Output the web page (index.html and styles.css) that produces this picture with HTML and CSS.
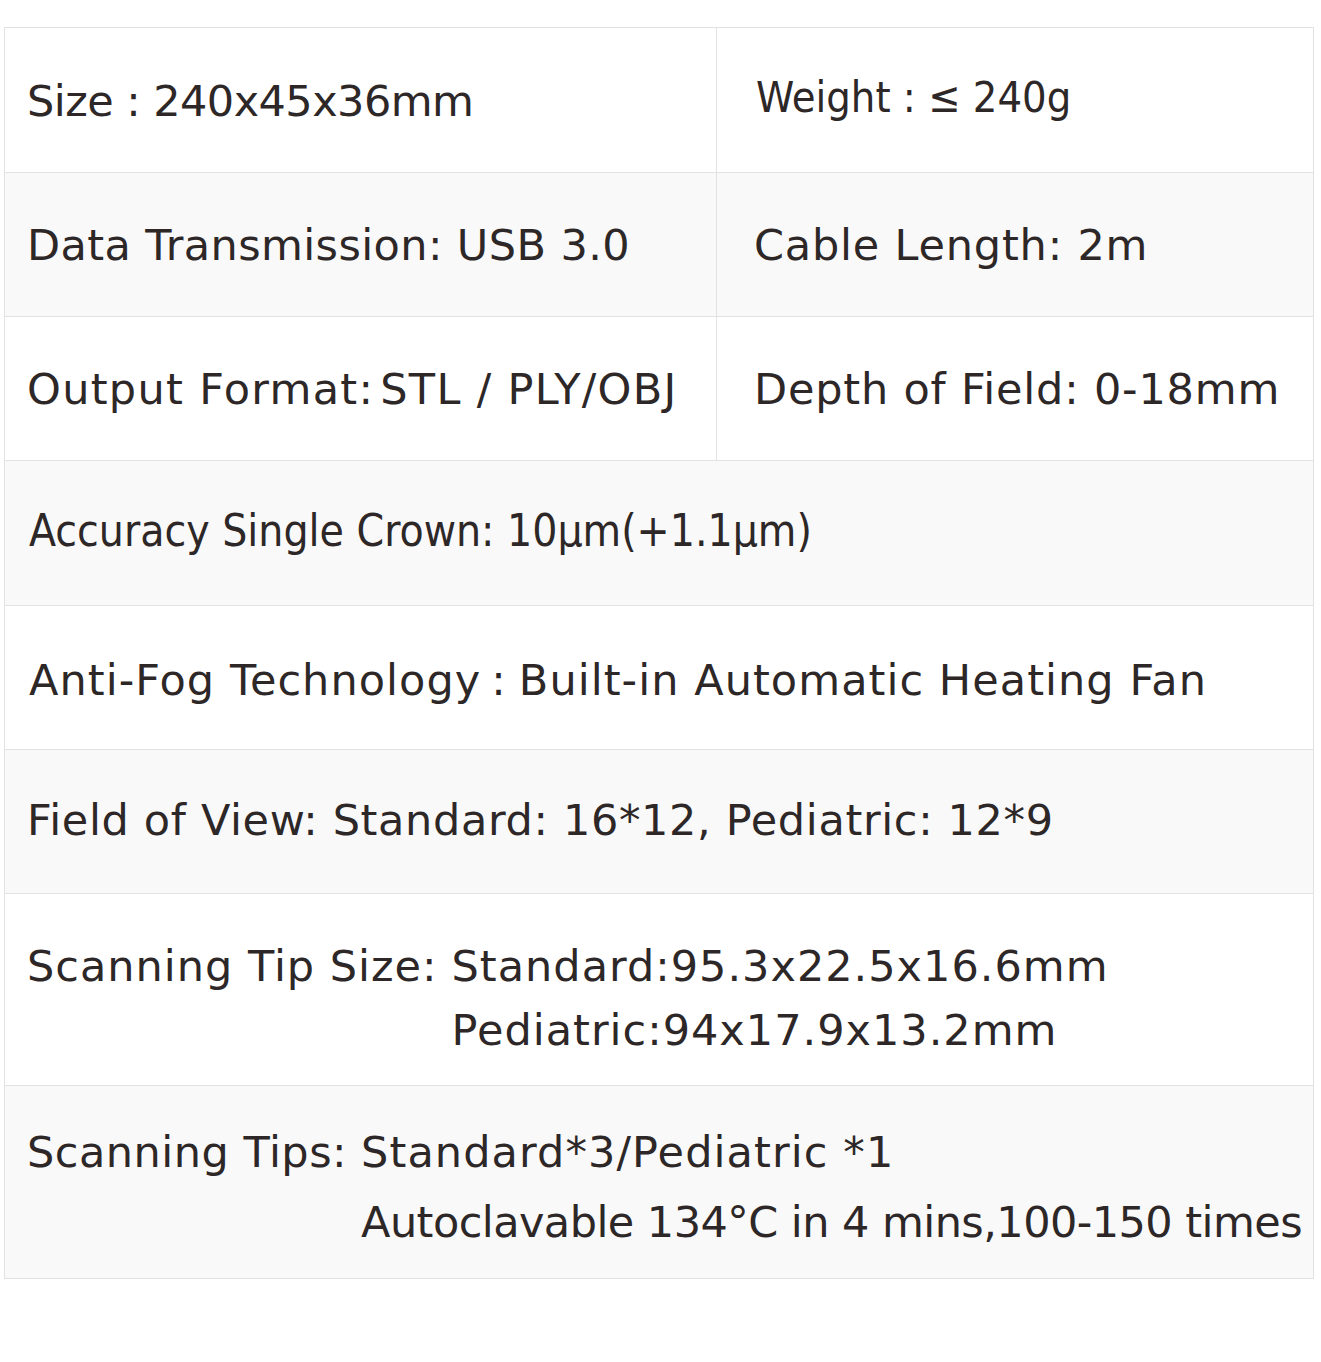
FILE: index.html
```html
<!DOCTYPE html>
<html lang="en">
<head>
<meta charset="utf-8">
<title>Specifications</title>
<link rel="stylesheet" href="styles.css">
</head>
<body>
<div class="page">
  <div class="spec-table">
    <div class="row split h145 white">
      <div class="cell left"><span class="t-size">Size : 240x45x36mm</span></div>
      <div class="cell right"><span class="t-weight">Weight : ≤ 240g</span></div>
    </div>
    <div class="row split h144 gray">
      <div class="cell left"><span class="t-data">Data Transmission: USB 3.0</span></div>
      <div class="cell right"><span class="t-cable">Cable Length: 2m</span></div>
    </div>
    <div class="row split h144 white">
      <div class="cell left"><span class="t-output">Output Format:<span class="fmt">STL / PLY/OBJ</span></span></div>
      <div class="cell right"><span class="t-depth">Depth of Field: 0-18mm</span></div>
    </div>
    <div class="row h145 gray">
      <div class="cell full"><span class="t-acc">Accuracy Single Crown: 10μm(+1.1μm)</span></div>
    </div>
    <div class="row h144 white">
      <div class="cell full"><span class="t-fog">Anti-Fog Technology<span class="colon">:</span>Built-in Automatic Heating Fan</span></div>
    </div>
    <div class="row h144 gray">
      <div class="cell full"><span class="t-fov">Field of View: Standard: 16*12, Pediatric: 12*9</span></div>
    </div>
    <div class="row h192 white">
      <div class="cell full multi tip-size">
        <span class="label">Scanning Tip Size:</span>
        <div class="lines">
          <span>Standard:95.3x22.5x16.6mm</span>
          <span>Pediatric:94x17.9x13.2mm</span>
        </div>
      </div>
    </div>
    <div class="row h193 gray">
      <div class="cell full multi tips">
        <span class="label">Scanning Tips:</span>
        <div class="lines">
          <span>Standard*3/Pediatric *1</span>
          <span class="autoclave">Autoclavable 134°C in 4 mins,100-150 times</span>
        </div>
      </div>
    </div>
  </div>
</div>
</body>
</html>
```

FILE: styles.css
```css
html, body {
  margin: 0;
  padding: 0;
  background: #ffffff;
}

.page {
  padding: 27px 0 84px 4px;
}

.spec-table {
  width: 1310px;
  box-sizing: border-box;
  border: 1px solid #e2e2e2;
  border-top: none;
  font-family: "DejaVu Sans", "Noto Sans CJK JP", sans-serif;
  font-size: 43px;
  line-height: 50px;
  color: #2d2727;
}

.row {
  box-sizing: border-box;
  border-top: 1px solid #e2e2e2;
  display: flex;
}

.row.split {
  display: grid;
  grid-template-columns: 712px 1fr;
}

.white { background: #ffffff; }
.gray { background: #f9f9f9; }

.h144 { height: 144px; }
.h145 { height: 145px; }
.h192 { height: 192px; }
.h193 { height: 193px; }

.cell {
  display: flex;
  align-items: center;
  white-space: nowrap;
  box-sizing: border-box;
}

.cell.left {
  padding-left: 22px;
  border-right: 1px solid #e2e2e2;
}

.cell.right {
  padding-left: 37px;
}

.cell.full {
  padding-left: 22px;
  flex: 1;
}

/* per-item tuning */
.t-size {
  letter-spacing: -0.55px;
  padding-top: 2px;
}

.t-weight {
  font-family: "DejaVu Sans Condensed", "DejaVu Sans", sans-serif;
  font-stretch: condensed;
  padding-bottom: 6px;
  padding-left: 2px;
}

.t-data { letter-spacing: 0.4px; }
.t-cable { letter-spacing: 0.8px; }

.t-output { letter-spacing: 1.3px; }
.t-output .fmt { margin-left: 6px; }

.t-depth { letter-spacing: 0.8px; padding-left: 0; }

.t-acc {
  font-family: "DejaVu Sans Condensed", "DejaVu Sans", sans-serif;
  font-stretch: condensed;
  font-size: 44px;
  padding-bottom: 4px;
  padding-left: 2px;
}

.t-fog {
  letter-spacing: 1.05px;
  padding-top: 4px;
  padding-left: 2px;
}
.t-fog .colon {
  margin: 0 12px 0 10px;
}

.t-fov {
  letter-spacing: 0.65px;
  padding-bottom: 4px;
}

.cell.multi {
  align-items: flex-start;
}

.multi .lines {
  display: flex;
  flex-direction: column;
}

.tip-size {
  padding-top: 40px;
  letter-spacing: 1px;
}
.tip-size .label {
  padding-right: 14px;
}
.tip-size .label,
.tip-size .lines span {
  line-height: 64px;
}

.tips {
  padding-top: 31px;
  letter-spacing: 1.1px;
}
.tips .label {
  padding-right: 14px;
  letter-spacing: 0.5px;
}
.tips .label,
.tips .lines span {
  line-height: 70px;
}
.tips .autoclave {
  letter-spacing: -0.55px;
}
```
